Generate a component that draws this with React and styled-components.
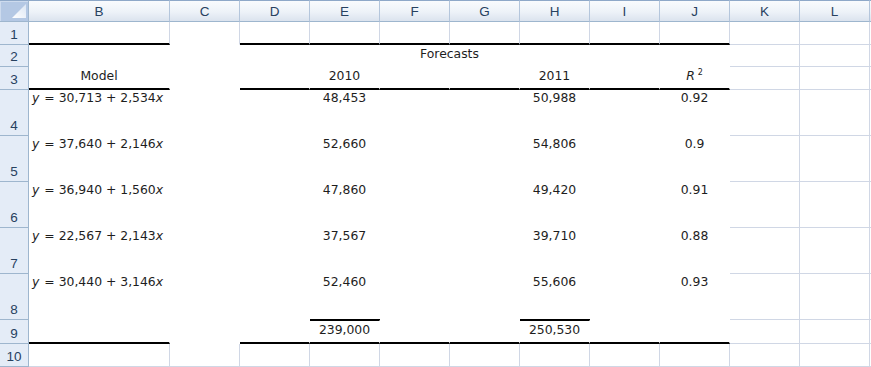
import React from 'react'
import styled, { createGlobalStyle } from 'styled-components'

const colors = {
  grid: '#d0d7e5',
  headLine: '#9eb6ce',
  headText: '#27415f',
  text: '#1e1e1e',
  rule: '#000000',
  none: 'transparent',
}

const COLUMNS = ['B', 'C', 'D', 'E', 'F', 'G', 'H', 'I', 'J', 'K', 'L', 'M']
const BLOCK = ['B', 'C', 'D', 'E', 'F', 'G', 'H', 'I', 'J']
const RULED = ['B', 'D', 'E', 'F', 'G', 'H', 'I', 'J']
const MERGED = ['E', 'F', 'G', 'H', 'I']
const ROWS = [1, 2, 3, 4, 5, 6, 7, 8, 9, 10]

const models = [
  { a: '30,713', b: '2,534', y2010: '48,453', y2011: '50,988', r2: '0.92' },
  { a: '37,640', b: '2,146', y2010: '52,660', y2011: '54,806', r2: '0.9' },
  { a: '36,940', b: '1,560', y2010: '47,860', y2011: '49,420', r2: '0.91' },
  { a: '22,567', b: '2,143', y2010: '37,567', y2011: '39,710', r2: '0.88' },
  { a: '30,440', b: '3,146', y2010: '52,460', y2011: '55,606', r2: '0.93' },
]

const buildContent = () => {
  const content = {
    D2: { text: 'Forecasts', center: true, span: 6 },
    B3: { text: 'Model', center: true },
    E3: { text: '2010', center: true },
    H3: { text: '2011', center: true },
    J3: {
      text: (
        <>
          <Var>R</Var>
          <Sup>2</Sup>
        </>
      ),
      center: true,
    },
    E9: { text: '239,000', center: true, rule: true },
    H9: { text: '250,530', center: true, rule: true },
  }

  models.forEach((m, i) => {
    const row = i + 4
    content[`B${row}`] = {
      text: (
        <>
          <Var>y</Var>
          <Gap />
          {`= ${m.a} + ${m.b}`}
          <Var>x</Var>
        </>
      ),
      tall: true,
    }
    content[`E${row}`] = { text: m.y2010, center: true, tall: true }
    content[`H${row}`] = { text: m.y2011, center: true, tall: true }
    content[`J${row}`] = { text: m.r2, center: true, tall: true }
  })

  return content
}

const edges = (row, col) => {
  const filled = BLOCK.includes(col) && row >= 2 && row <= 9
  const thick = RULED.includes(col) && [1, 3, 9].includes(row)
  const hidden = filled || (col === 'C' && row === 1)
  return {
    $right: filled ? colors.none : colors.grid,
    $bottom: thick ? colors.rule : hidden ? colors.none : colors.grid,
    $thick: thick,
  }
}

export default function App() {
  const content = buildContent()

  return (
    <>
      <GlobalStyle />
      <Sheet>
        <Corner>
          <svg width="14" height="14" viewBox="0 0 14 14">
            <defs>
              <linearGradient id="tri" x1="0" y1="1" x2="1" y2="0">
                <stop offset="0" stopColor="#ffffff" />
                <stop offset="1" stopColor="#dbe6f4" />
              </linearGradient>
            </defs>
            <polygon points="0,14 14,14 14,0" fill="url(#tri)" />
          </svg>
        </Corner>
        {COLUMNS.map((col) => (
          <ColHead key={col}>{col === 'M' ? '' : col}</ColHead>
        ))}

        {ROWS.map((row) => (
          <React.Fragment key={row}>
            <RowHead>{row}</RowHead>
            {COLUMNS.map((col) => {
              if (row === 2 && MERGED.includes(col)) return null
              const c = content[`${col}${row}`] || {}
              return (
                <Cell
                  key={col}
                  {...edges(row, col)}
                  $span={c.span}
                  $center={c.center}
                  $tall={c.tall}
                  $rule={c.rule}
                >
                  {c.text && <Text>{c.text}</Text>}
                </Cell>
              )
            })}
          </React.Fragment>
        ))}
      </Sheet>
    </>
  )
}

/**
 * STYLED COMPONENTS
 */

const GlobalStyle = createGlobalStyle`
  html, body {
    margin: 0;
    padding: 0;
    background: #ffffff;
    overflow: hidden;
  }
`

const Sheet = styled('div')({
  display: 'grid',
  gridTemplateColumns: '29px 141px repeat(10, 70px) 1fr',
  gridTemplateRows: '22px 23px 22px 23px repeat(5, 46px) 24px 23px',
  width: '100vw',
  height: 367,
  overflow: 'hidden',
})

const Corner = styled('div')({
  display: 'flex',
  alignItems: 'flex-end',
  justifyContent: 'flex-end',
  padding: '0 2px 3px 0',
  boxSizing: 'border-box',
  background: '#b4c8e4',
  borderTop: '1px solid #8ea8c8',
  borderRight: `1px solid ${colors.headLine}`,
  borderBottom: `1px solid ${colors.headLine}`,
  boxShadow: 'inset 1px 1px 0 #cddbee',
})

const ColHead = styled('div')({
  display: 'flex',
  alignItems: 'center',
  justifyContent: 'center',
  boxSizing: 'border-box',
  background: 'linear-gradient(180deg, #f9fbfd 0%, #edf2f8 55%, #dbe3ee 100%)',
  borderTop: '1px solid #8ea8c8',
  borderRight: '1px solid #b4c6dc',
  borderBottom: `1px solid ${colors.headLine}`,
  color: colors.headText,
  fontFamily: '"Liberation Sans", Arial, sans-serif',
  fontSize: 13.5,
})

const RowHead = styled('div')({
  display: 'flex',
  alignItems: 'flex-end',
  justifyContent: 'center',
  boxSizing: 'border-box',
  paddingBottom: 2,
  background: '#e4ecf7',
  borderRight: `1px solid ${colors.headLine}`,
  borderBottom: `1px solid ${colors.headLine}`,
  color: colors.headText,
  fontFamily: '"Liberation Sans", Arial, sans-serif',
  fontSize: 13.5,
  lineHeight: '15px',
})

const Cell = styled.div`
  grid-column: ${(p) => (p.$span ? `span ${p.$span}` : 'auto')};
  display: flex;
  align-items: ${(p) => (p.$tall ? 'flex-start' : 'flex-end')};
  justify-content: ${(p) => (p.$center ? 'center' : 'flex-start')};
  box-sizing: border-box;
  min-width: 0;
  padding: ${(p) => (p.$tall ? '0 3px' : '0 3px 5px')};
  border-right: 1px solid ${(p) => p.$right};
  border-bottom: ${(p) => (p.$thick ? 2 : 1)}px solid ${(p) => p.$bottom};
  ${(p) => p.$rule && `border-top: 1px solid ${colors.rule}; box-shadow: 0 -1px 0 ${colors.rule};`}
  color: ${colors.text};
  font-family: "DejaVu Sans", Verdana, sans-serif;
  font-size: 12.4px;
  line-height: 15px;
`

const Text = styled('span')({
  whiteSpace: 'pre',
})

const Var = styled('i')({
  fontStyle: 'italic',
})

const Gap = styled('span')({
  display: 'inline-block',
  width: 5,
})

const Sup = styled('sup')({
  fontSize: 8,
  lineHeight: 0,
  verticalAlign: 5,
  marginLeft: 3,
})
